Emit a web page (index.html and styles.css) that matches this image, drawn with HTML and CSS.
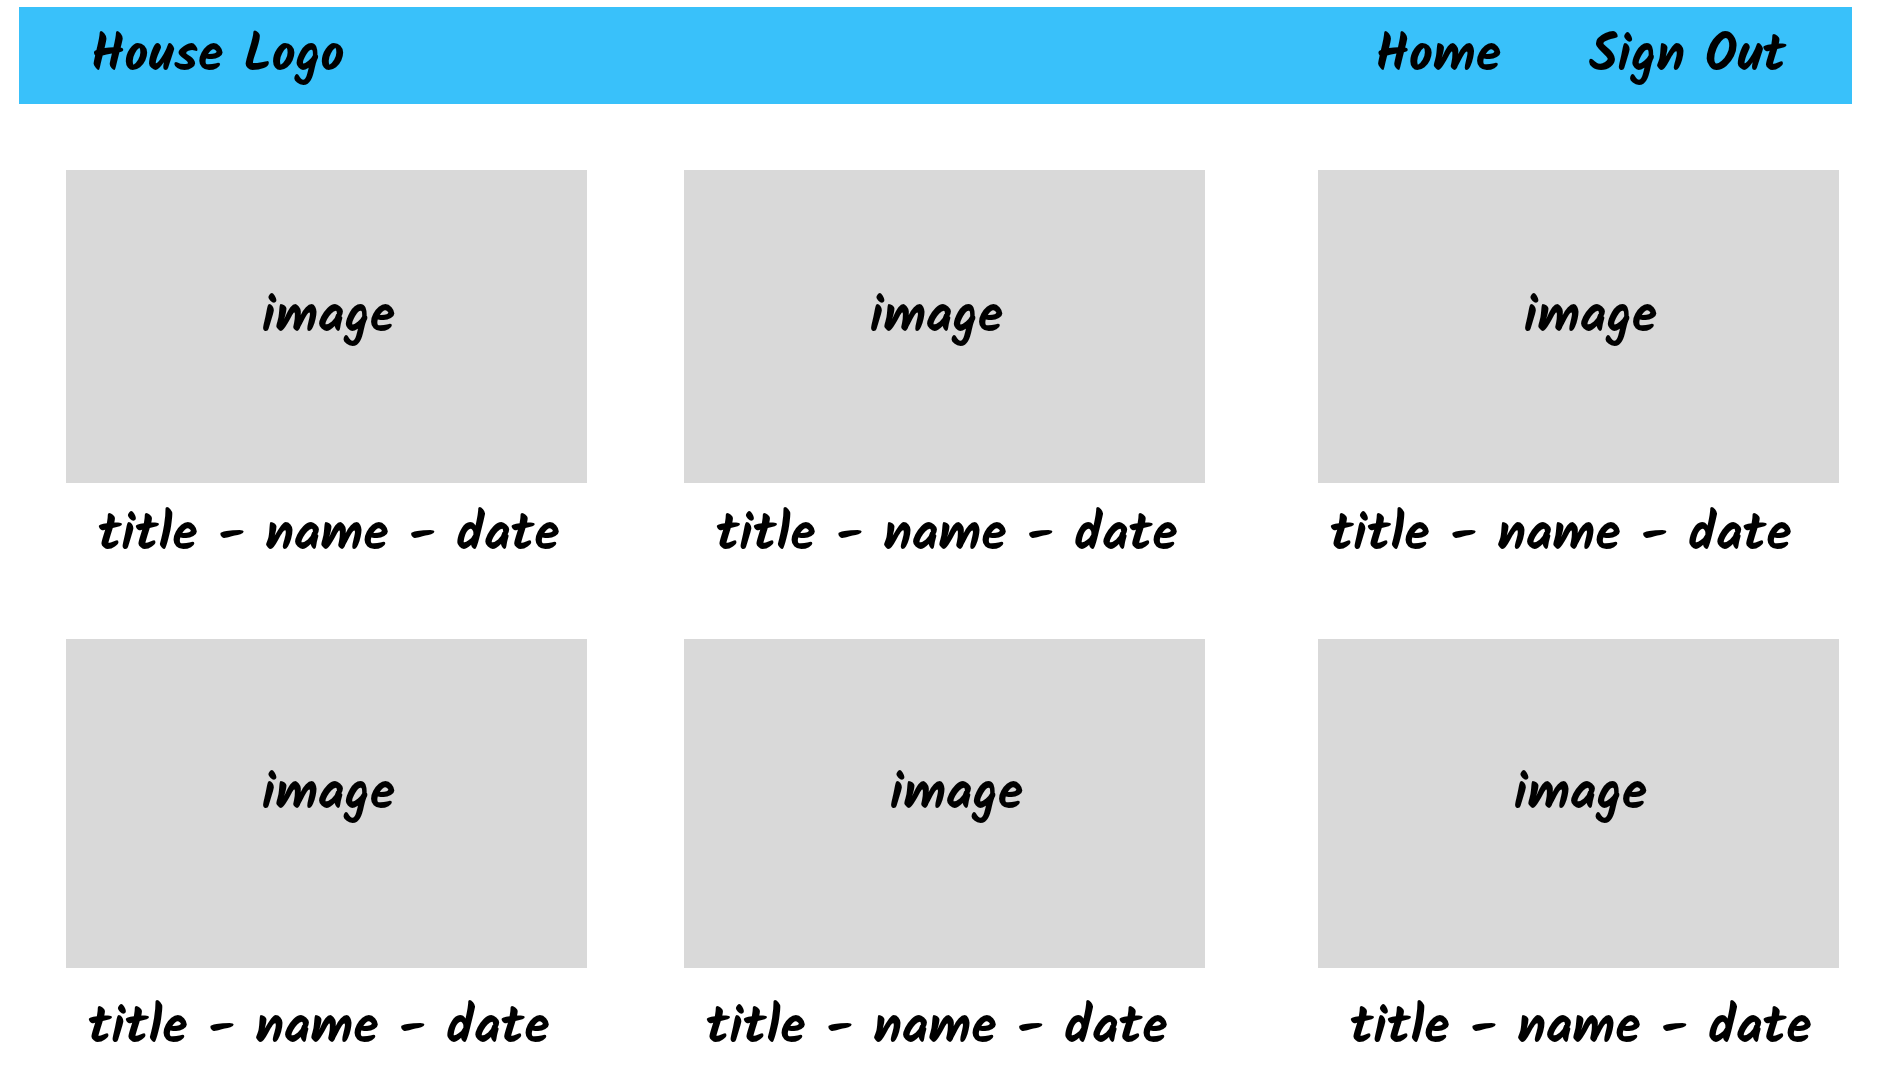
FILE: index.html
```html
<!DOCTYPE html>
<html lang="en">
<head>
<meta charset="utf-8">
<meta name="viewport" content="width=device-width, initial-scale=1">
<title>House Logo</title>
<link rel="stylesheet" href="styles.css">
</head>
<body>
<header class="site-header">
  <a class="logo" href="#">House Logo</a>
  <nav class="site-nav">
    <a href="#">Home</a>
    <a href="#">Sign Out</a>
  </nav>
</header>
<main class="gallery">
  <section class="row">
    <figure class="card">
      <div class="picture label-middle">image</div>
      <figcaption class="caption inset-large">title - name - date</figcaption>
    </figure>
    <figure class="card">
      <div class="picture label-near">image</div>
      <figcaption class="caption inset-large">title - name - date</figcaption>
    </figure>
    <figure class="card">
      <div class="picture label-far">image</div>
      <figcaption class="caption inset-small">title - name - date</figcaption>
    </figure>
  </section>
  <section class="row row-tall">
    <figure class="card">
      <div class="picture label-middle">image</div>
      <figcaption class="caption inset-medium">title - name - date</figcaption>
    </figure>
    <figure class="card">
      <div class="picture label-far">image</div>
      <figcaption class="caption inset-medium">title - name - date</figcaption>
    </figure>
    <figure class="card">
      <div class="picture label-middle">image</div>
      <figcaption class="caption inset-large">title - name - date</figcaption>
    </figure>
  </section>
</main>
</body>
</html>
```
FILE: styles.css
```css
* {
  box-sizing: border-box;
}

body {
  margin: 0;
  padding-top: 7px;
  background: #fff;
  color: #000;
  font-family: Kalam, "Open Sans", sans-serif;
  font-size: 52px;
  font-weight: 700;
  line-height: 60px;
}

a {
  color: inherit;
  text-decoration: none;
}

.site-header {
  display: flex;
  align-items: center;
  justify-content: space-between;
  min-height: 97px;
  margin: 0 30px 0 19px;
  padding: 4px 66px 0 72px;
  background: #39c1fa;
}

.site-nav {
  display: flex;
  gap: 88px;
}

.gallery {
  padding: 66px 43px 0 66px;
}

.row {
  display: grid;
  grid-template-columns: 1fr 97px 1fr 113px 1fr;
  margin-bottom: 72px;
}

.card {
  margin: 0;
}

.card:nth-child(2) {
  grid-column: 3;
}

.card:nth-child(3) {
  grid-column: 5;
}

.picture {
  display: flex;
  align-items: center;
  aspect-ratio: 521 / 313;
  padding-bottom: 16px;
  background: #d9d9d9;
}

.row-tall .picture {
  aspect-ratio: 521 / 329;
}

.label-near {
  padding-left: 186px;
}

.label-middle {
  padding-left: 196px;
}

.label-far {
  padding-left: 206px;
}

.caption {
  padding-top: 24px;
  white-space: nowrap;
}

.row-tall .caption {
  padding-top: 32px;
}

.inset-small {
  padding-left: 12px;
}

.inset-medium {
  padding-left: 22px;
}

.inset-large {
  padding-left: 32px;
}
```
